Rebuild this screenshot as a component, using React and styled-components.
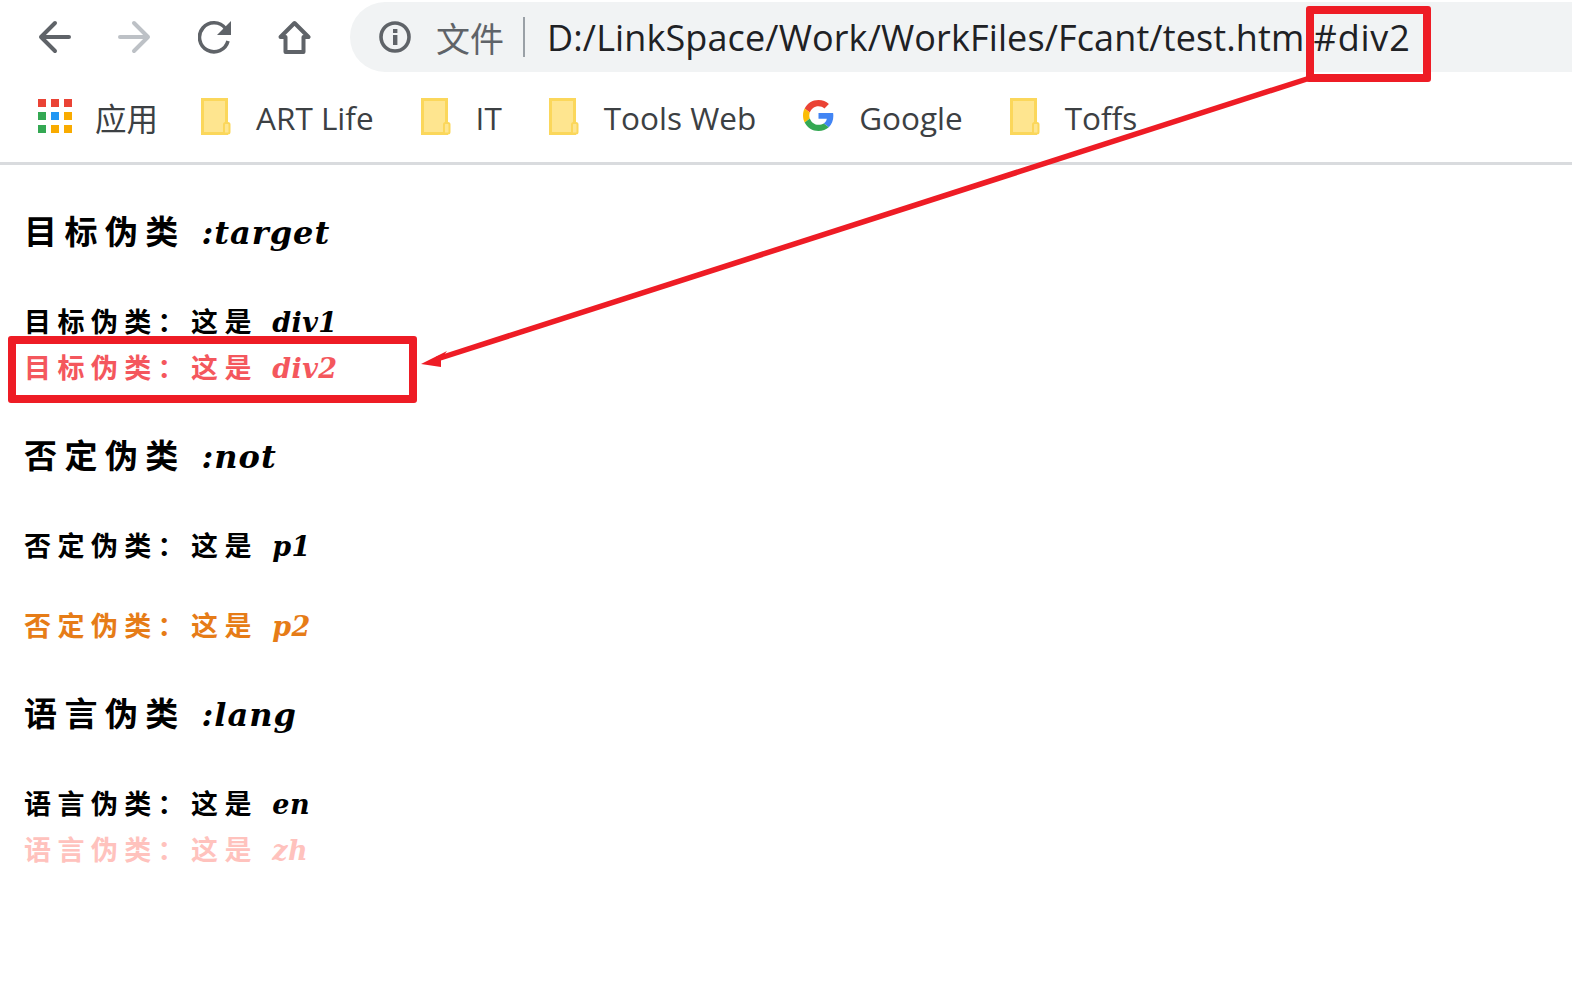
import React from "react";
import styled, { createGlobalStyle } from "styled-components";

const Global = createGlobalStyle`
  html, body {
    margin: 0;
    padding: 0;
    background: #fff;
  }
  body {
    font-family: "Open Sans", "Noto Sans CJK SC", sans-serif;
  }
`;

const Page = styled.div`
  position: relative;
  width: 1572px;
  height: 993px;
  overflow: hidden;
`;

const Toolbar = styled.div`
  display: flex;
  align-items: center;
  height: 70px;
  padding: 2px 0 0 38px;
  gap: 39px;
`;

const NavGroup = styled.div`
  display: flex;
  align-items: center;
  gap: 47px;
`;

const NavIcon = styled.svg`
  width: 33px;
  height: 34px;
  flex: none;
  color: ${(p) => (p.$off ? "#bdc1c6" : "#5f6368")};
`;

const Omnibox = styled.div`
  flex: 1;
  display: flex;
  align-items: center;
  height: 70px;
  padding-left: 29px;
  background: #f1f3f4;
  border-radius: 35px 0 0 35px;
`;

const InfoIcon = styled.svg`
  width: 32px;
  height: 32px;
  flex: none;
  color: #5f6368;
`;

const Scheme = styled.span`
  margin-left: 25px;
  font-size: 34px;
  color: #5f6368;
`;

const Divider = styled.span`
  width: 2px;
  height: 40px;
  margin: 0 22px 0 19px;
  background: #9aa0a6;
`;

const Url = styled.span`
  font-size: 36px;
  color: #202124;
  white-space: nowrap;
  letter-spacing: 0.12px;
`;

const UrlHash = styled.span`
  letter-spacing: 0.8px;
`;

const Bookmarks = styled.div`
  display: flex;
  align-items: center;
  height: 90px;
  padding-left: 38px;
  border-bottom: 3px solid #d9dbde;
`;

const Bookmark = styled.div`
  display: flex;
  align-items: center;
  gap: ${(p) => p.$gap || 25}px;
  margin-right: ${(p) => p.$end || 47}px;
  font-size: 31.5px;
  color: #3c4043;
  white-space: nowrap;
`;

const AppsGrid = styled.div`
  display: grid;
  grid-template-columns: repeat(3, 8px);
  grid-auto-rows: 8px;
  gap: 5px;
  margin-top: -3px;
`;

const AppsDot = styled.i`
  display: block;
  background: ${(p) => p.$color};
`;

const Folder = styled.svg`
  width: 30px;
  height: 37px;
  flex: none;
  margin-top: -1px;
`;

const GoogleMark = styled.svg`
  width: 31px;
  height: 31px;
  flex: none;
  margin-top: -4px;
`;

const Content = styled.main`
  padding: 45px 0 0 24px;
  font-family: "Noto Sans CJK SC", sans-serif;
`;

const Section = styled.section`
  margin-bottom: 43px;
`;

const Heading = styled.h3`
  margin: 0 0 43px;
  height: 46px;
  font-size: 33px;
  line-height: 40px;
  font-weight: 700;
  letter-spacing: 7.4px;
  color: #000;
  white-space: nowrap;
`;

const Line = styled.div`
  height: 46px;
  margin-bottom: ${(p) => p.$gap || 0}px;
  font-size: 27px;
  line-height: 44px;
  font-weight: 700;
  letter-spacing: 6.4px;
  color: ${(p) => p.$color || "#000"};
  white-space: nowrap;
`;

const Latin = styled.span`
  font-family: "DejaVu Serif", serif;
  font-style: italic;
  font-weight: 700;
  letter-spacing: ${(p) => (p.$size ? 1 : 0.4)}px;
  margin-left: ${(p) => (p.$size ? 1 : 2)}px;
  font-size: ${(p) => p.$size || 27}px;
`;

const RedBox = styled.div`
  position: absolute;
  left: ${(p) => p.$x}px;
  top: ${(p) => p.$y}px;
  width: ${(p) => p.$w}px;
  height: ${(p) => p.$h}px;
  box-sizing: border-box;
  border: 8px solid #ee1c25;
  border-radius: 3px;
`;

const ArrowLayer = styled.svg`
  position: absolute;
  left: 0;
  top: 0;
  pointer-events: none;
`;

const FolderIcon = () => (
  <Folder viewBox="0 0 30 37">
    <path d="M1.5 1.5h24v34h-24z" fill="#fee58f" stroke="#fbd75b" strokeWidth="3" />
    <rect x="23" y="25" width="5.5" height="10.5" rx="1.5" fill="#fee58f" stroke="#fbd75b" strokeWidth="2" />
  </Folder>
);

const appsColors = ["#ea4335", "#ea4335", "#ea4335", "#34a853", "#2196f3", "#f9ab00", "#34a853", "#f9ab00", "#f9ab00"];

export default function App() {
  return (
    <Page>
      <Global />
      <Toolbar>
        <NavGroup>
          <NavIcon viewBox="0 0 33 34" fill="none" stroke="currentColor" strokeWidth="4" strokeLinecap="round" strokeLinejoin="round">
            <path d="M31 17H3M17 3 3 17l14 14" />
          </NavIcon>
          <NavIcon $off viewBox="0 0 33 34" fill="none" stroke="currentColor" strokeWidth="4" strokeLinecap="round" strokeLinejoin="round">
            <path d="M2 17h28M16 3l14 14-14 14" />
          </NavIcon>
          <NavIcon viewBox="0 0 33 34">
            <path d="M27.500 8.500A14.500 14.500 0 1 0 30 21" fill="none" stroke="currentColor" strokeWidth="3.6" />
            <path d="M33 1v14H19z" fill="currentColor" />
          </NavIcon>
          <NavIcon viewBox="0 0 33 34" fill="none" stroke="currentColor" strokeWidth="4" strokeLinejoin="round" strokeLinecap="round">
            <path d="M2.500 17 16.500 3l14 14h-5v15H7.500V17z" />
          </NavIcon>
        </NavGroup>
        <Omnibox>
          <InfoIcon viewBox="0 0 32 32">
            <circle cx="16" cy="16" r="14" fill="none" stroke="currentColor" strokeWidth="3.6" />
            <rect x="14" y="14" width="4.4" height="10" fill="currentColor" />
            <rect x="14" y="8" width="4.4" height="4" fill="currentColor" />
          </InfoIcon>
          <Scheme>文件</Scheme>
          <Divider />
          <Url>D:/LinkSpace/Work/WorkFiles/Fcant/test.html<UrlHash>#div2</UrlHash></Url>
        </Omnibox>
      </Toolbar>

      <Bookmarks>
        <Bookmark $gap={23} $end={43}>
          <AppsGrid>
            {appsColors.map((c, i) => (
              <AppsDot key={i} $color={c} />
            ))}
          </AppsGrid>
          应用
        </Bookmark>
        <Bookmark><FolderIcon />ART Life</Bookmark>
        <Bookmark><FolderIcon />IT</Bookmark>
        <Bookmark><FolderIcon />Tools Web</Bookmark>
        <Bookmark>
          <GoogleMark viewBox="0 0 48 48">
            <path fill="#ea4335" d="M24 9.500c3.500 0 6.700 1.200 9.200 3.600l6.900-6.900C35.900 2.400 30.500 0 24 0 14.600 0 6.500 5.400 2.600 13.200l8 6.200C12.500 13.700 17.800 9.500 24 9.500z" />
            <path fill="#4285f4" d="M47 24.500c0-1.600-.1-3.100-.4-4.500H24v9h12.900c-.6 3-2.200 5.500-4.700 7.200l7.700 6C44.400 37.900 47 31.800 47 24.500z" />
            <path fill="#fbbc05" d="M10.500 28.600c-.5-1.400-.8-3-.8-4.600s.3-3.200.8-4.600l-8-6.200C.9 16.400 0 20.100 0 24s.9 7.600 2.600 10.800l7.900-6.200z" />
            <path fill="#34a853" d="M24 48c6.500 0 11.900-2.100 15.900-5.800l-7.700-6c-2.200 1.400-4.900 2.300-8.200 2.300-6.200 0-11.500-4.200-13.400-9.900l-8 6.200C6.500 42.600 14.600 48 24 48z" />
          </GoogleMark>
          Google
        </Bookmark>
        <Bookmark><FolderIcon />Toffs</Bookmark>
      </Bookmarks>

      <Content>
        <Section>
          <Heading>目标伪类 <Latin $size={32}>:target</Latin></Heading>
          <Line>目标伪类：这是 <Latin>div1</Latin></Line>
          <Line $color="#f4575d">目标伪类：这是 <Latin>div2</Latin></Line>
        </Section>
        <Section>
          <Heading>否定伪类 <Latin $size={32}>:not</Latin></Heading>
          <Line $gap={34}>否定伪类：这是 <Latin>p1</Latin></Line>
          <Line $color="#e67c17">否定伪类：这是 <Latin>p2</Latin></Line>
        </Section>
        <Section>
          <Heading>语言伪类 <Latin $size={32}>:lang</Latin></Heading>
          <Line>语言伪类：这是 <Latin>en</Latin></Line>
          <Line $color="#ffc2bd">语言伪类：这是 <Latin>zh</Latin></Line>
        </Section>
      </Content>

      <RedBox $x={1306} $y={6} $w={125} $h={76} />
      <RedBox $x={8} $y={336} $w={409} $h={67} />
      <ArrowLayer width="1572" height="993" viewBox="0 0 1572 993">
        <line x1="1310" y1="78" x2="437" y2="359" stroke="#ee1c25" strokeWidth="5.5" />
        <path d="M421 364 447 351 441 359 441 367z" fill="#ee1c25" />
      </ArrowLayer>
    </Page>
  );
}
